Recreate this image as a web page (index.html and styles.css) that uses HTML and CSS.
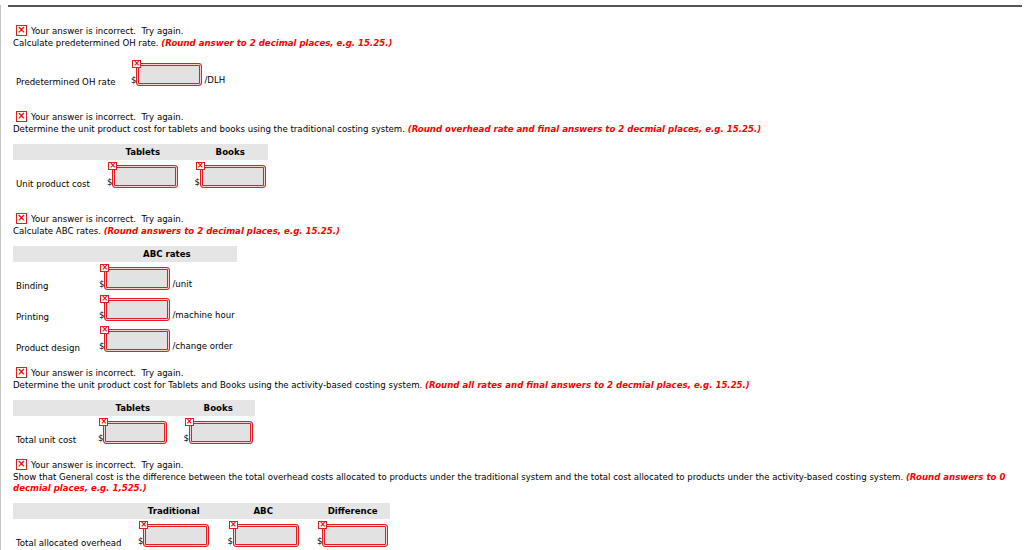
FILE: index.html
```html
<!DOCTYPE html>
<html>
<head>
    <title>Activity-Based Costing</title>
    <link rel="stylesheet" href="styles.css">
</head>
<body>
    <div class="page">
        <div class="rule"></div>

        <div class="question">
            <div class="feedback"><span class="mark"></span>Your answer is incorrect.&nbsp; Try again.</div>
            <p class="prompt">Calculate predetermined OH rate. <em class="hint">(Round answer to 2 decimal places, e.g. 15.25.)</em></p>
            <table class="answers oh-rate">
                <tr>
                    <td class="label">Predetermined OH rate</td>
                    <td>$<span class="field"><input type="text"></span><span class="unit">/DLH</span></td>
                </tr>
            </table>
        </div>

        <div class="question spaced">
            <div class="feedback"><span class="mark"></span>Your answer is incorrect.&nbsp; Try again.</div>
            <p class="prompt">Determine the unit product cost for tablets and books using the traditional costing system. <em class="hint">(Round overhead rate and final answers to 2 decmial places, e.g. 15.25.)</em></p>
            <table class="answers traditional">
                <tr>
                    <th></th>
                    <th>Tablets</th>
                    <th>Books</th>
                </tr>
                <tr>
                    <td class="label">Unit product cost</td>
                    <td>$<span class="field"><input type="text"></span></td>
                    <td>$<span class="field"><input type="text"></span></td>
                </tr>
            </table>
        </div>

        <div class="question spaced">
            <div class="feedback"><span class="mark"></span>Your answer is incorrect.&nbsp; Try again.</div>
            <p class="prompt">Calculate ABC rates. <em class="hint">(Round answers to 2 decimal places, e.g. 15.25.)</em></p>
            <table class="answers abc-rates">
                <tr>
                    <th></th>
                    <th>ABC rates</th>
                </tr>
                <tr>
                    <td class="label">Binding</td>
                    <td>$<span class="field"><input type="text"></span><span class="unit">/unit</span></td>
                </tr>
                <tr>
                    <td class="label">Printing</td>
                    <td>$<span class="field"><input type="text"></span><span class="unit">/machine hour</span></td>
                </tr>
                <tr>
                    <td class="label">Product design</td>
                    <td>$<span class="field"><input type="text"></span><span class="unit">/change order</span></td>
                </tr>
            </table>
        </div>

        <div class="question">
            <div class="feedback"><span class="mark"></span>Your answer is incorrect.&nbsp; Try again.</div>
            <p class="prompt">Determine the unit product cost for Tablets and Books using the activity-based costing system. <em class="hint">(Round all rates and final answers to 2 decmial places, e.g. 15.25.)</em></p>
            <table class="answers abc-cost">
                <tr>
                    <th></th>
                    <th>Tablets</th>
                    <th>Books</th>
                </tr>
                <tr>
                    <td class="label">Total unit cost</td>
                    <td>$<span class="field"><input type="text"></span></td>
                    <td>$<span class="field"><input type="text"></span></td>
                </tr>
            </table>
        </div>

        <div class="question">
            <div class="feedback"><span class="mark"></span>Your answer is incorrect.&nbsp; Try again.</div>
            <p class="prompt">Show that General cost is the difference between the total overhead costs allocated to products under the traditional system and the total cost allocated to products under the activity-based costing system. <em class="hint">(Round answers to 0 decmial places, e.g. 1,525.)</em></p>
            <table class="answers overhead">
                <tr>
                    <th></th>
                    <th>Traditional</th>
                    <th>ABC</th>
                    <th>Difference</th>
                </tr>
                <tr>
                    <td class="label">Total allocated overhead</td>
                    <td>$<span class="field"><input type="text"></span></td>
                    <td>$<span class="field"><input type="text"></span></td>
                    <td>$<span class="field"><input type="text"></span></td>
                </tr>
            </table>
        </div>
    </div>
</body>
</html>
```

FILE: styles.css
```css
body {
    margin: 0;
    font-family: "DejaVu Sans", Verdana, sans-serif;
    font-size: 8.6px;
    color: #000;
    background: #fff;
}
.page {
    box-sizing: border-box;
    min-height: 550px;
    padding: 0 13px 0 12px;
    border-left: 1px solid #c4c4c4;
}
.rule {
    height: 2px;
    margin: 5px -11px 16px -5px;
    background: #555;
}
.question {
    margin-top: 10px;
}
.question.spaced {
    margin-top: 20px;
}
.feedback {
    display: flex;
    align-items: center;
    height: 15px;
    padding-left: 3px;
}
.mark {
    box-sizing: border-box;
    width: 11px;
    height: 11px;
    margin-right: 4px;
    border: 1px solid #e31b23;
    background: #fff;
    color: #e00;
    font-weight: bold;
    font-size: 10px;
    line-height: 8px;
    text-align: center;
}
.mark::before {
    content: "\00d7";
}
.prompt {
    margin: 0;
    line-height: 11px;
}
.hint {
    color: #f00;
    font-weight: bold;
    font-style: italic;
}
.answers {
    margin-top: 9px;
    border-collapse: collapse;
}
.answers th {
    height: 16px;
    padding: 0 13px 0 3px;
    background: #e5e5e5;
    font-weight: bold;
    line-height: 16px;
    text-align: center;
}
.answers td {
    padding: 5px 13px 3px 3px;
    vertical-align: bottom;
    white-space: nowrap;
    line-height: 11px;
}
.answers td.label {
    padding: 0 0 1px 3px;
    text-align: left;
}
.answers th:last-child,
.answers td:last-child {
    padding-right: 2px;
}
.oh-rate .label { width: 112px; }
.traditional .label { width: 88px; }
.abc-rates .label { width: 80px; }
.abc-cost .label { width: 79px; }
.overhead .label { width: 119px; }
.overhead th,
.overhead td { padding-right: 15px; }
.field {
    position: relative;
    display: inline-block;
    vertical-align: bottom;
}
.field input {
    display: block;
    box-sizing: border-box;
    width: 66px;
    height: 23px;
    margin: 0;
    padding: 0;
    border: 1px solid #e31b23;
    border-radius: 3px;
    background: #e2e2e2;
    box-shadow: inset 0 0 0 1px #fbd3d3, inset 0 0 0 2px #e31b23;
}
.abc-cost .field input {
    width: 64px;
}
.field::before {
    content: "\00d7";
    position: absolute;
    z-index: 1;
    left: -4px;
    top: -3px;
    box-sizing: border-box;
    width: 9px;
    height: 8px;
    border: 1px solid #e31b23;
    background: #fff;
    color: #e00;
    font-weight: bold;
    font-size: 8px;
    line-height: 6px;
    text-align: center;
}
.unit {
    margin-left: 2px;
}
```
